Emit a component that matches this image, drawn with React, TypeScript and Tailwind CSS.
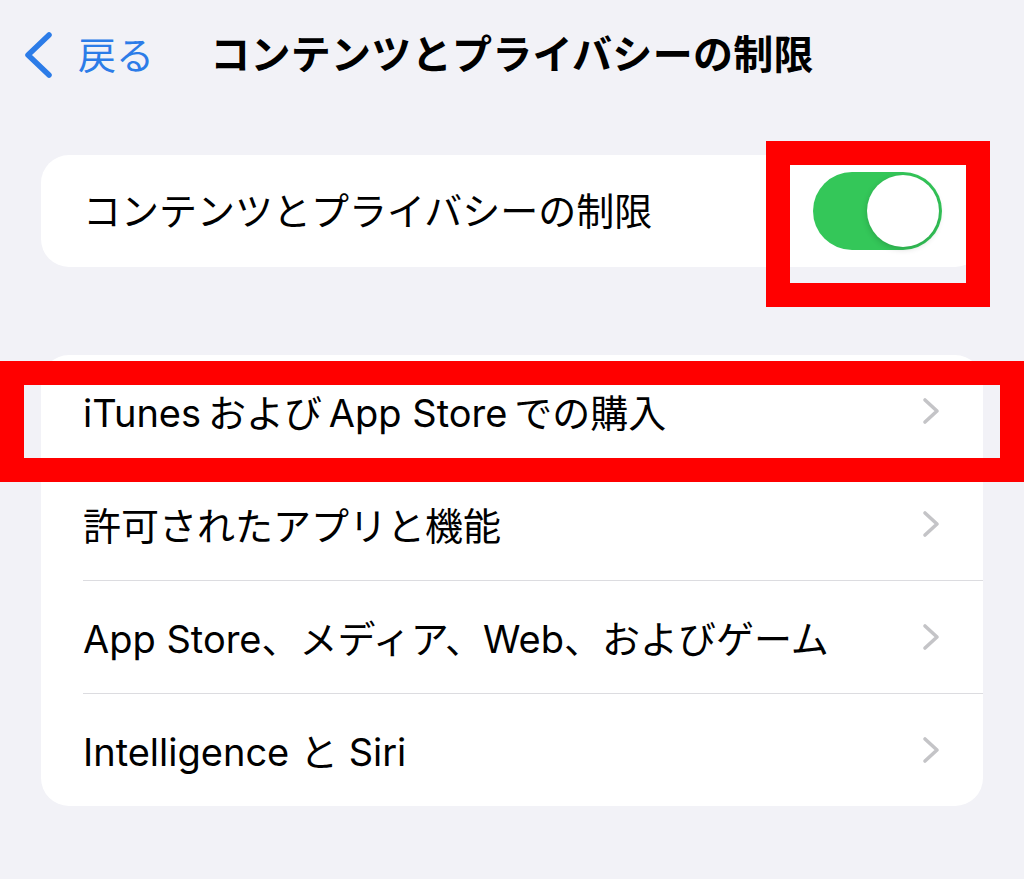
import { ReactNode } from 'react';

const font = { fontFamily: 'Inter, "Noto Sans CJK JP", sans-serif' };

const rows = [
  'iTunes\u2009および\u2009App Store\u2009での購入',
  '許可されたアプリと機能',
  'App Store、メディア、Web、およびゲーム',
  'Intelligence と Siri',
];

function Chevron() {
  return (
    <svg width="18" height="28" viewBox="0 0 18 28" fill="none" className="shrink-0">
      <path d="M3 3 L15 14 L3 25" stroke="#c4c4c7" strokeWidth="3.6" strokeLinecap="round" strokeLinejoin="round" />
    </svg>
  );
}

function Row({ children, last }: { children: ReactNode; last?: boolean }) {
  return (
    <div className="flex flex-col">
      <div className="flex h-[112px] items-center justify-between pl-[42px] pr-[43px]">
        <span className="pt-[4px] text-[38px] leading-none text-black">{children}</span>
        <Chevron />
      </div>
      {!last && <div className="ml-[42px] h-px bg-[#dcdce0]" />}
    </div>
  );
}

export default function App() {
  return (
    <div className="relative min-h-[879px] w-full overflow-hidden bg-[#f2f2f7]" style={font}>
      {/* nav bar */}
      <header className="grid h-[110px] grid-cols-[1fr_auto_1fr] items-center">
        <div className="flex items-center gap-[24px] pl-[23px]">
          <svg width="31" height="48" viewBox="0 0 31 48" fill="none">
            <path d="M26 4 L5 24 L26 44" stroke="#2c7ce8" strokeWidth="5.5" strokeLinecap="round" strokeLinejoin="round" />
          </svg>
          <span className="text-[38px] leading-none text-[#2c7ce8]">戻る</span>
        </div>
        <h1 className="text-[40px] font-bold leading-none tracking-[0.3px] text-black">コンテンツとプライバシーの制限</h1>
        <div />
      </header>

      {/* master switch */}
      <section className="mx-[41px] mt-[45px] flex h-[112px] items-center justify-between rounded-[28px] bg-white pl-[42px] pr-[41px]">
        <span className="text-[38px] leading-none text-black">コンテンツとプライバシーの制限</span>
        <div className="flex h-[78px] w-[129px] items-center justify-end rounded-full bg-[#34c759] pr-[3px]">
          <div className="h-[72px] w-[72px] rounded-full bg-white shadow-[0_2px_6px_rgba(0,0,0,0.18)]" />
        </div>
      </section>

      {/* list */}
      <section className="mx-[41px] mt-[88px] flex flex-col overflow-hidden rounded-[28px] bg-white">
        {rows.map((r, i) => (
          <Row key={r} last={i === rows.length - 1}>
            {r}
          </Row>
        ))}
      </section>

      {/* annotation boxes */}
      <div className="absolute left-[766px] top-[141px] h-[166px] w-[224px] border-[24px] border-[#ff0000]" />
      <div className="absolute left-0 top-[361px] h-[121px] w-[1024px] border-[24px] border-[#ff0000]" />
    </div>
  );
}
